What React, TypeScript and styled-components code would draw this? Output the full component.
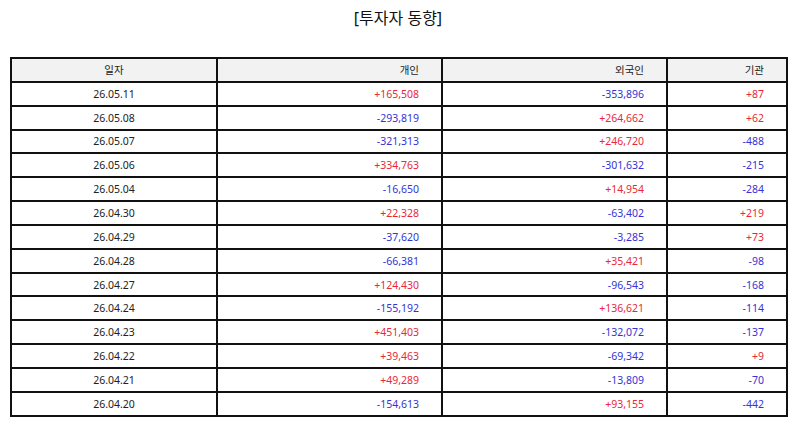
import styled, { createGlobalStyle } from 'styled-components'

const GlobalStyle = createGlobalStyle`
  html, body {
    margin: 0;
    padding: 0;
    background: #fff;
  }
  body {
    font-family: "Noto Sans", "Noto Sans CJK KR", sans-serif;
  }
`

type Row = { date: string; indiv: string; foreign: string; inst: string }

const rows: Row[] = [
  { date: '26.05.11', indiv: '+165,508', foreign: '-353,896', inst: '+87' },
  { date: '26.05.08', indiv: '-293,819', foreign: '+264,662', inst: '+62' },
  { date: '26.05.07', indiv: '-321,313', foreign: '+246,720', inst: '-488' },
  { date: '26.05.06', indiv: '+334,763', foreign: '-301,632', inst: '-215' },
  { date: '26.05.04', indiv: '-16,650', foreign: '+14,954', inst: '-284' },
  { date: '26.04.30', indiv: '+22,328', foreign: '-63,402', inst: '+219' },
  { date: '26.04.29', indiv: '-37,620', foreign: '-3,285', inst: '+73' },
  { date: '26.04.28', indiv: '-66,381', foreign: '+35,421', inst: '-98' },
  { date: '26.04.27', indiv: '+124,430', foreign: '-96,543', inst: '-168' },
  { date: '26.04.24', indiv: '-155,192', foreign: '+136,621', inst: '-114' },
  { date: '26.04.23', indiv: '+451,403', foreign: '-132,072', inst: '-137' },
  { date: '26.04.22', indiv: '+39,463', foreign: '-69,342', inst: '+9' },
  { date: '26.04.21', indiv: '+49,289', foreign: '-13,809', inst: '-70' },
  { date: '26.04.20', indiv: '-154,613', foreign: '+93,155', inst: '-442' },
]

const App = () => {
  return (
    <Page>
      <GlobalStyle />
      <Title>[투자자 동향]</Title>
      <Table>
        <colgroup>
          <col style={{ width: 206 }} />
          <col style={{ width: 225 }} />
          <col style={{ width: 225 }} />
          <col style={{ width: 120 }} />
        </colgroup>
        <thead>
          <tr>
            <Th $align="center">일자</Th>
            <Th>개인</Th>
            <Th>외국인</Th>
            <Th>기관</Th>
          </tr>
        </thead>
        <tbody>
          {rows.map((r) => (
            <tr key={r.date}>
              <DateCell>{r.date}</DateCell>
              <NumCell $up={r.indiv.startsWith('+')}>{r.indiv}</NumCell>
              <NumCell $up={r.foreign.startsWith('+')}>{r.foreign}</NumCell>
              <NumCell $up={r.inst.startsWith('+')}>{r.inst}</NumCell>
            </tr>
          ))}
        </tbody>
      </Table>
    </Page>
  )
}

const Page = styled.div`
  width: 794px;
  padding: 6px 8px 0 10px;
  box-sizing: border-box;
`

const Title = styled.h1`
  margin: 0 0 27px;
  text-align: center;
  font-size: 16px;
  font-weight: 400;
  line-height: 24px;
  color: #111;
`

const Table = styled.table`
  width: 775px;
  border-collapse: collapse;
  table-layout: fixed;
  font-size: 10.5px;
  color: #222;
`

const cellBase = `
  height: 23.85px;
  padding: 0 22px;
  border: 2px solid #111;
  box-sizing: border-box;
  white-space: nowrap;
`

const Th = styled.th<{ $align?: string }>`
  ${cellBase}
  background: #f2f2f2;
  font-weight: 400;
  text-align: ${(p) => p.$align || 'right'};
`

const DateCell = styled.td`
  ${cellBase}
  text-align: center;
`

const NumCell = styled.td<{ $up: boolean }>`
  ${cellBase}
  text-align: right;
  color: ${(p) => (p.$up ? '#e8283a' : '#3434d4')};
`

export default App
